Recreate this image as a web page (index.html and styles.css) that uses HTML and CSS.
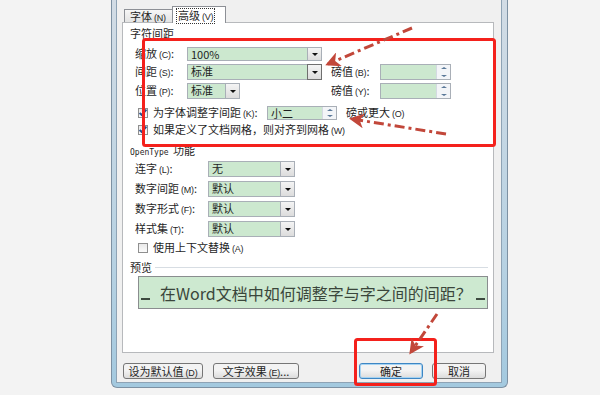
FILE: index.html
```html
<!DOCTYPE html>
<html lang="zh-CN">
<head>
    <meta charset="UTF-8">
    <meta name="viewport" content="width=device-width, initial-scale=1.0">
    <title>字体 - 高级</title>
    <link rel="stylesheet" href="styles.css">
</head>
<body>
    <div class="window">
        <div class="dialog">
            <div class="tabs">
                <div class="tab">字体<span class="key">(N)</span></div>
                <div class="tab active"><span class="focus">高级<span class="key">(V)</span></span></div>
            </div>

            <div class="panel">
                <div class="group-title">字符间距</div>

                <div class="row first">
                    <span class="lbl">缩放<span class="key">(C)</span>:</span>
                    <div class="field combo w-wide"><span>100%</span><i class="drop"></i></div>
                </div>
                <div class="row tight">
                    <span class="lbl">间距<span class="key">(S)</span>:</span>
                    <div class="field combo w-wide"><span>标准</span><i class="drop hot"></i></div>
                    <span class="lbl pt">磅值<span class="key">(B)</span>:</span>
                    <div class="field spin w-pt"><span></span><i class="arrows"></i></div>
                </div>
                <div class="row tight">
                    <span class="lbl">位置<span class="key">(P)</span>:</span>
                    <div class="field combo w-short"><span>标准</span><i class="drop"></i></div>
                    <span class="lbl pt far">磅值<span class="key">(Y)</span>:</span>
                    <div class="field spin w-pt"><span></span><i class="arrows"></i></div>
                </div>

                <div class="row check kern">
                    <span class="box checked"></span>
                    <span class="check-text kern-text">为字体调整字间距<span class="key">(K)</span>:</span>
                    <div class="field spin w-kern"><span>小二</span><i class="arrows"></i></div>
                    <span class="after">磅或更大<span class="key">(O)</span></span>
                </div>
                <div class="row check tight-check">
                    <span class="box checked"></span>
                    <span class="check-text">如果定义了文档网格，则对齐到网格<span class="key">(W)</span></span>
                </div>

                <div class="group-title open"><span class="mono">OpenType</span> 功能</div>

                <div class="row ot">
                    <span class="lbl wide">连字<span class="key">(L)</span>:</span>
                    <div class="field combo w-ot"><span>无</span><i class="drop"></i></div>
                </div>
                <div class="row ot">
                    <span class="lbl wide">数字间距<span class="key">(M)</span>:</span>
                    <div class="field combo w-ot"><span>默认</span><i class="drop"></i></div>
                </div>
                <div class="row ot">
                    <span class="lbl wide">数字形式<span class="key">(F)</span>:</span>
                    <div class="field combo w-ot"><span>默认</span><i class="drop"></i></div>
                </div>
                <div class="row ot">
                    <span class="lbl wide">样式集<span class="key">(T)</span>:</span>
                    <div class="field combo w-ot"><span>默认</span><i class="drop"></i></div>
                </div>
                <div class="row check ctx">
                    <span class="box"></span>
                    <span class="check-text">使用上下文替换<span class="key">(A)</span></span>
                </div>

                <div class="group-title preview-title">预览<span class="rule"></span></div>
                <div class="preview">
                    <span class="mark"></span>
                    <span class="sample">在Word文档中如何调整字与字之间的间距？</span>
                    <span class="mark end"></span>
                </div>
            </div>

            <div class="buttons">
                <div class="btn b-default">设为默认值<span class="key">(D)</span></div>
                <div class="btn b-effect">文字效果<span class="key">(E)</span>...</div>
                <div class="btn b-ok">确定</div>
                <div class="btn b-cancel">取消</div>
            </div>
        </div>
    </div>

    <!-- annotation layer drawn over the dialog -->
    <svg class="overlay" width="600" height="395" viewBox="0 0 600 395">
        <defs>
            <marker id="head" markerWidth="5" markerHeight="5" refX="4" refY="2.5" orient="auto" markerUnits="strokeWidth">
                <path d="M0,0 L5,2.5 L0,5 L1.4,2.5 z" fill="#c2473a"/>
            </marker>
        </defs>
        <rect x="143.5" y="39.5" width="351" height="106" rx="2" fill="none" stroke="#f4211c" stroke-width="3"/>
        <rect x="355.5" y="339.5" width="80" height="45" rx="2" fill="none" stroke="#f4211c" stroke-width="3"/>
        <line x1="412" y1="28" x2="328" y2="64" stroke="#c2473a" stroke-width="3" stroke-dasharray="10 4 3 4" marker-end="url(#head)"/>
        <line x1="446" y1="134" x2="352" y2="119" stroke="#c2473a" stroke-width="3" stroke-dasharray="10 4 3 4" marker-end="url(#head)"/>
        <line x1="437" y1="314" x2="411" y2="352" stroke="#c2473a" stroke-width="3" stroke-dasharray="10 4 3 4" marker-end="url(#head)"/>
    </svg>
</body>
</html>
```

FILE: styles.css
```css
* {
    margin: 0;
    padding: 0;
    box-sizing: border-box;
}

body {
    width: 600px;
    height: 395px;
    overflow: hidden;
    position: relative;
    background: #f3f3f3;
    font-family: "Noto Sans CJK SC", "Noto Sans", sans-serif;
    font-size: 11px;
    line-height: 14px;
    color: #1f1f1f;
}

/* window frame */
.window {
    margin-left: 111px;
    width: 397px;
    height: 388px;
    padding: 0 5px 4px 4px;
    background: linear-gradient(#d2dce5, #b6d1e2 70%, #a3c9df);
    border: 1px solid #7d91a3;
    border-top: none;
    border-radius: 0 0 6px 6px;
}

.dialog {
    height: 100%;
    background: #f0f0f0;
    border: 1px solid #8ea3b5;
    border-top: none;
}

/* tabs */
.tabs {
    display: flex;
    align-items: flex-end;
    height: 22px;
    padding-left: 7px;
}

.tab {
    height: 13px;
    width: 49px;
    padding-left: 5px;
    font-size: 11px;
    line-height: 12px;
    background: linear-gradient(#f6f6f6, #e3e3e3);
    border: 1px solid #8d9096;
    border-bottom: none;
}

.tab.active {
    position: relative;
    z-index: 1;
    width: 54px;
    height: 17px;
    margin-bottom: -1px;
    margin-left: -1px;
    padding: 1px 0 0 3px;
    background: #fff;
}

.focus {
    display: inline-block;
    padding: 0 1px;
    border: 1px dotted #333;
    line-height: 12px;
}

.key {
    font-family: "Liberation Sans", sans-serif;
    font-size: 9px;
    margin-left: 2px;
    letter-spacing: -0.2px;
}

/* main page */
.panel {
    height: 331px;
    margin: 0 7px 0 5px;
    background: #fff;
    border: 1px solid #b7b9bc;
}

.group-title {
    height: 14px;
    margin: 3px 0 0 7px;
    color: #1f1f1f;
}

.group-title.open {
    margin-top: 6px;
}

.mono {
    font-family: "DejaVu Sans Mono", monospace;
    font-size: 8px;
    margin-right: 2px;
}

.row {
    display: flex;
    align-items: center;
    height: 16px;
    margin-top: 3px;
    padding-left: 12px;
}

.row.first {
    margin-top: 7px;
    height: 14px;
}

.row.ot {
    margin-top: 4px;
}

.row.check {
    height: 14px;
    padding-left: 15px;
}

.row.kern {
    margin-top: 7px;
}

.row.ctx {
    margin-top: 4px;
}

.lbl {
    width: 52px;
    flex-shrink: 0;
    white-space: nowrap;
}

.lbl.wide {
    width: 73px;
}

.lbl.pt {
    width: 49px;
    margin-left: 9px;
}

.lbl.far {
    margin-left: 91px;
}

/* inputs */
.field {
    display: flex;
    height: 100%;
    background: #cce8cf;
    border: 1px solid #a9afb7;
}

.field span {
    flex: 1;
    padding-left: 3px;
    line-height: 13px;
    white-space: nowrap;
}

.w-wide { width: 135px; }
.w-short { width: 53px; }
.w-pt { width: 71px; }
.w-kern { width: 70px; }
.w-ot { width: 87px; }

.drop {
    position: relative;
    width: 14px;
    background: linear-gradient(#f4f4f4, #dcdcdc);
    border-left: 1px solid #a9afb7;
}

.drop.hot {
    border: 1px solid #6f6f6f;
    margin: -1px -1px -1px 0;
    width: 15px;
}

.drop::after {
    content: "";
    position: absolute;
    left: 50%;
    top: 50%;
    margin: -1px 0 0 -3px;
    border-left: 3px solid transparent;
    border-right: 3px solid transparent;
    border-top: 3px solid #111;
}

.arrows {
    position: relative;
    width: 14px;
    background: #f3f5f8;
    border-left: 1px solid #d4dae2;
}

.arrows::before,
.arrows::after {
    content: "";
    position: absolute;
    left: 4px;
    border-left: 3px solid transparent;
    border-right: 3px solid transparent;
}

.arrows::before {
    top: 2px;
    border-bottom: 2.5px solid #5a7898;
}

.arrows::after {
    bottom: 2px;
    border-top: 2.5px solid #5a7898;
}

/* checkboxes */
.box {
    width: 10px;
    height: 10px;
    flex-shrink: 0;
    border: 1px solid #8f8f8f;
    background: linear-gradient(#e9e9e9, #fbfbfb);
    position: relative;
}

.box.checked::after {
    content: "";
    box-sizing: content-box;
    position: absolute;
    left: 2px;
    top: -1px;
    width: 2px;
    height: 6px;
    border-right: 2px solid #2b4f8c;
    border-bottom: 2px solid #2b4f8c;
    transform: rotate(40deg);
}

.check-text {
    margin-left: 5px;
    white-space: nowrap;
}

.kern-text {
    width: 114px;
    flex-shrink: 0;
}

.after {
    margin-left: 9px;
    white-space: nowrap;
}

/* preview */
.preview-title {
    display: flex;
    align-items: center;
    margin-top: 5px;
}

.rule {
    flex: 1;
    height: 1px;
    margin: 0 5px 0 3px;
    background: #d7dde3;
}

.preview {
    display: flex;
    align-items: center;
    width: 350px;
    height: 33px;
    margin: 2px 0 0 15px;
    background: #cde9d0;
    border: 1px solid #8a8d8f;
}

.sample {
    margin-left: 10px;
    font-size: 16px;
    line-height: 20px;
    color: #3a463b;
    white-space: nowrap;
}

.mark {
    align-self: flex-end;
    width: 9px;
    height: 2px;
    margin: 0 0 8px 2px;
    background: #3d4a3f;
}

.mark.end {
    margin: 0 2px 8px auto;
}

/* bottom buttons */
.buttons {
    display: flex;
    height: 16px;
    margin-top: 10px;
    padding-left: 6px;
}

.btn {
    height: 16px;
    text-align: center;
    line-height: 14px;
    font-size: 11px;
    white-space: nowrap;
    background: linear-gradient(#f3f3f3 45%, #dcdcdc);
    border: 1px solid #767676;
    border-radius: 3px;
}

.b-default { width: 80px; }
.b-effect { width: 86px; margin-left: 10px; }
.b-ok {
    width: 64px;
    margin-left: 60px;
    border-color: #3d86c4;
    box-shadow: inset 0 0 0 1px #a6d3f2;
}
.b-cancel { width: 54px; margin-left: 9px; }

.overlay {
    position: absolute;
    left: 0;
    top: 0;
    pointer-events: none;
}
```
